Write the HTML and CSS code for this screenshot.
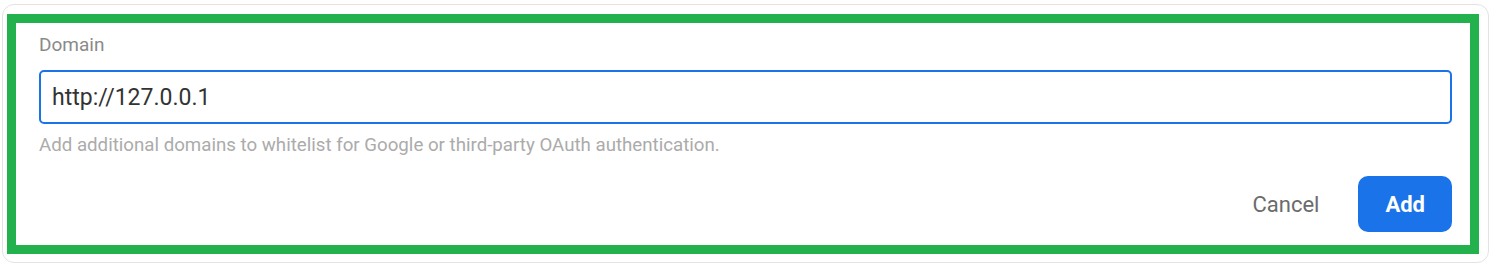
FILE: index.html
```html
<!DOCTYPE html>
<html lang="en">
<head>
<meta charset="utf-8">
<title>Domain</title>
<link rel="stylesheet" href="styles.css">
</head>
<body>
  <div class="card">
    <div class="highlight">
      <form class="domain-form">
        <label class="field-label" for="domain">Domain</label>
        <div class="input-box">
          <input id="domain" class="text-input" type="text" value="http://127.0.0.1">
        </div>
        <p class="hint">Add additional domains to whitelist for Google or third-party OAuth authentication.</p>
        <div class="actions">
          <button type="button" class="btn btn-text">Cancel</button>
          <button type="button" class="btn btn-primary">Add</button>
        </div>
      </form>
    </div>
  </div>
</body>
</html>
```

FILE: styles.css
```css
html, body {
  margin: 0;
  padding: 0;
  background: #ffffff;
}

body {
  padding: 4px 0 0 2px;
  font-family: Roboto, "Liberation Sans", Arial, sans-serif;
}

.card {
  box-sizing: border-box;
  width: 1487px;
  height: 259px;
  border: 1px solid #e3e3e3;
  border-radius: 12px;
  padding: 9px 9px 8px 4px;
  background: #fff;
}

.highlight {
  box-sizing: border-box;
  height: 240px;
  border: 9px solid #22b14c;
  background: #fff;
}

.domain-form {
  display: flex;
  flex-direction: column;
  padding: 11px 18px 0 23px;
  margin: 0;
}

.field-label {
  font-size: 19px;
  line-height: 21px;
  color: #8a8a8a;
}

.input-box {
  margin-top: 15px;
  box-sizing: border-box;
  height: 54px;
  border: 2px solid #1a73e8;
  border-radius: 5px;
  display: flex;
  align-items: center;
  padding: 0 11px;
}

.text-input {
  flex: 1;
  border: none;
  outline: none;
  padding: 0;
  margin: 0;
  font-family: Roboto, "Liberation Sans", Arial, sans-serif;
  font-size: 23px;
  line-height: 27px;
  color: #333333;
  background: transparent;
}

.hint {
  margin: 10px 0 0;
  font-size: 18.7px;
  line-height: 22px;
  color: #ababab;
}

.actions {
  margin-top: 20px;
  display: flex;
  justify-content: flex-end;
  align-items: center;
  gap: 23px;
}

.btn {
  font-family: Roboto, "Liberation Sans", Arial, sans-serif;
  font-size: 22px;
  height: 56px;
  border: none;
  cursor: pointer;
  border-radius: 10px;
}

.btn-text {
  background: transparent;
  color: #6b6b6b;
  padding: 0 16px;
}

.btn-primary {
  background: #1a73e8;
  color: #ffffff;
  font-weight: 700;
  padding: 0 27px;
}
```
